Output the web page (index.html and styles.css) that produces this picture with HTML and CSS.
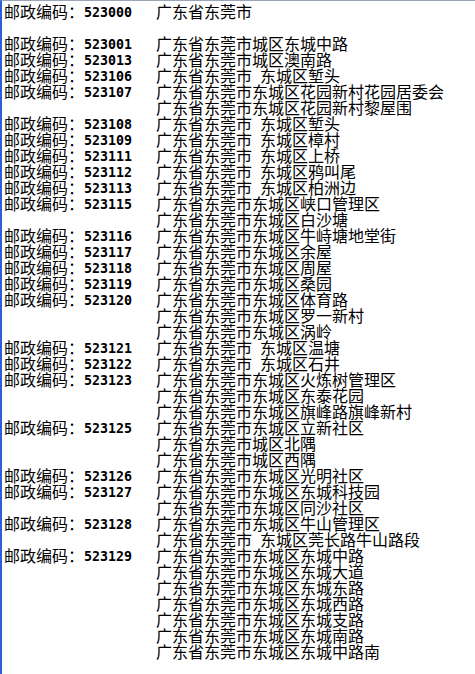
FILE: index.html
```html
<!DOCTYPE html>
<html lang="zh-CN">
<head>
<meta charset="utf-8">
<title>邮政编码</title>
<link rel="stylesheet" href="styles.css">
</head>
<body>
<div class="frame">
  <div class="list">
    <div class="code">邮政编码：<b class="num">523000</b></div>
    <div class="addr"><div>广东省东莞市</div></div>
    <div class="gap"></div>

    <div class="code">邮政编码：<b class="num">523001</b></div>
    <div class="addr"><div>广东省东莞市城区东城中路</div></div>

    <div class="code">邮政编码：<b class="num">523013</b></div>
    <div class="addr"><div>广东省东莞市城区澳南路</div></div>

    <div class="code">邮政编码：<b class="num">523106</b></div>
    <div class="addr"><div>广东省东莞市<span class="sp"></span>东城区堑头</div></div>

    <div class="code">邮政编码：<b class="num">523107</b></div>
    <div class="addr">
      <div>广东省东莞市东城区花园新村花园居委会</div>
      <div>广东省东莞市东城区花园新村黎屋围</div>
    </div>

    <div class="code">邮政编码：<b class="num">523108</b></div>
    <div class="addr"><div>广东省东莞市<span class="sp"></span>东城区堑头</div></div>

    <div class="code">邮政编码：<b class="num">523109</b></div>
    <div class="addr"><div>广东省东莞市<span class="sp"></span>东城区樟村</div></div>

    <div class="code">邮政编码：<b class="num">523111</b></div>
    <div class="addr"><div>广东省东莞市<span class="sp"></span>东城区上桥</div></div>

    <div class="code">邮政编码：<b class="num">523112</b></div>
    <div class="addr"><div>广东省东莞市<span class="sp"></span>东城区鸦叫尾</div></div>

    <div class="code">邮政编码：<b class="num">523113</b></div>
    <div class="addr"><div>广东省东莞市<span class="sp"></span>东城区柏洲边</div></div>

    <div class="code">邮政编码：<b class="num">523115</b></div>
    <div class="addr">
      <div>广东省东莞市东城区峡口管理区</div>
      <div>广东省东莞市东城区白沙塘</div>
    </div>

    <div class="code">邮政编码：<b class="num">523116</b></div>
    <div class="addr"><div>广东省东莞市东城区牛峙塘地堂街</div></div>

    <div class="code">邮政编码：<b class="num">523117</b></div>
    <div class="addr"><div>广东省东莞市东城区余屋</div></div>

    <div class="code">邮政编码：<b class="num">523118</b></div>
    <div class="addr"><div>广东省东莞市东城区周屋</div></div>

    <div class="code">邮政编码：<b class="num">523119</b></div>
    <div class="addr"><div>广东省东莞市东城区桑园</div></div>

    <div class="code">邮政编码：<b class="num">523120</b></div>
    <div class="addr">
      <div>广东省东莞市东城区体育路</div>
      <div>广东省东莞市东城区罗一新村</div>
      <div>广东省东莞市东城区涡岭</div>
    </div>

    <div class="code">邮政编码：<b class="num">523121</b></div>
    <div class="addr"><div>广东省东莞市<span class="sp"></span>东城区温塘</div></div>

    <div class="code">邮政编码：<b class="num">523122</b></div>
    <div class="addr"><div>广东省东莞市<span class="sp"></span>东城区石井</div></div>

    <div class="code">邮政编码：<b class="num">523123</b></div>
    <div class="addr">
      <div>广东省东莞市东城区火炼树管理区</div>
      <div>广东省东莞市东城区东泰花园</div>
      <div>广东省东莞市东城区旗峰路旗峰新村</div>
    </div>

    <div class="code">邮政编码：<b class="num">523125</b></div>
    <div class="addr">
      <div>广东省东莞市东城区立新社区</div>
      <div>广东省东莞市城区北隅</div>
      <div>广东省东莞市城区西隅</div>
    </div>

    <div class="code">邮政编码：<b class="num">523126</b></div>
    <div class="addr"><div>广东省东莞市东城区光明社区</div></div>

    <div class="code">邮政编码：<b class="num">523127</b></div>
    <div class="addr">
      <div>广东省东莞市东城区东城科技园</div>
      <div>广东省东莞市东城区同沙社区</div>
    </div>

    <div class="code">邮政编码：<b class="num">523128</b></div>
    <div class="addr">
      <div>广东省东莞市东城区牛山管理区</div>
      <div>广东省东莞市<span class="sp"></span>东城区莞长路牛山路段</div>
    </div>

    <div class="code">邮政编码：<b class="num">523129</b></div>
    <div class="addr">
      <div>广东省东莞市东城区东城中路</div>
      <div>广东省东莞市东城区东城大道</div>
      <div>广东省东莞市东城区东城东路</div>
      <div>广东省东莞市东城区东城西路</div>
      <div>广东省东莞市东城区东城支路</div>
      <div>广东省东莞市东城区东城南路</div>
      <div>广东省东莞市东城区东城中路南</div>
    </div>
  </div>
</div>
</body>
</html>
```

FILE: styles.css
```css
html, body {
  margin: 0;
  padding: 0;
  background: #ffffff;
}

.frame {
  box-sizing: border-box;
  min-height: 674px;
  border-top: 1px solid #9aa6b8;
  border-left: 2px solid #2c5fd8;
  padding: 2px 0 0 2px;
  font-family: "Noto Sans CJK SC", sans-serif;
  font-size: 16px;
  line-height: 16px;
  color: #000000;
}

.list {
  display: grid;
  grid-template-columns: 152px auto;
  align-items: start;
}

.code {
  white-space: nowrap;
  height: 16px;
}

.num {
  font-family: "DejaVu Sans Mono", monospace;
  font-weight: bold;
  font-size: 13.3px;
  line-height: 0;
  position: relative;
  top: -1px;
}

.addr {
  white-space: nowrap;
}

.addr > div {
  height: 16px;
}

.sp {
  display: inline-block;
  width: 8px;
}

.gap {
  grid-column: 1 / -1;
  height: 16px;
}
```
